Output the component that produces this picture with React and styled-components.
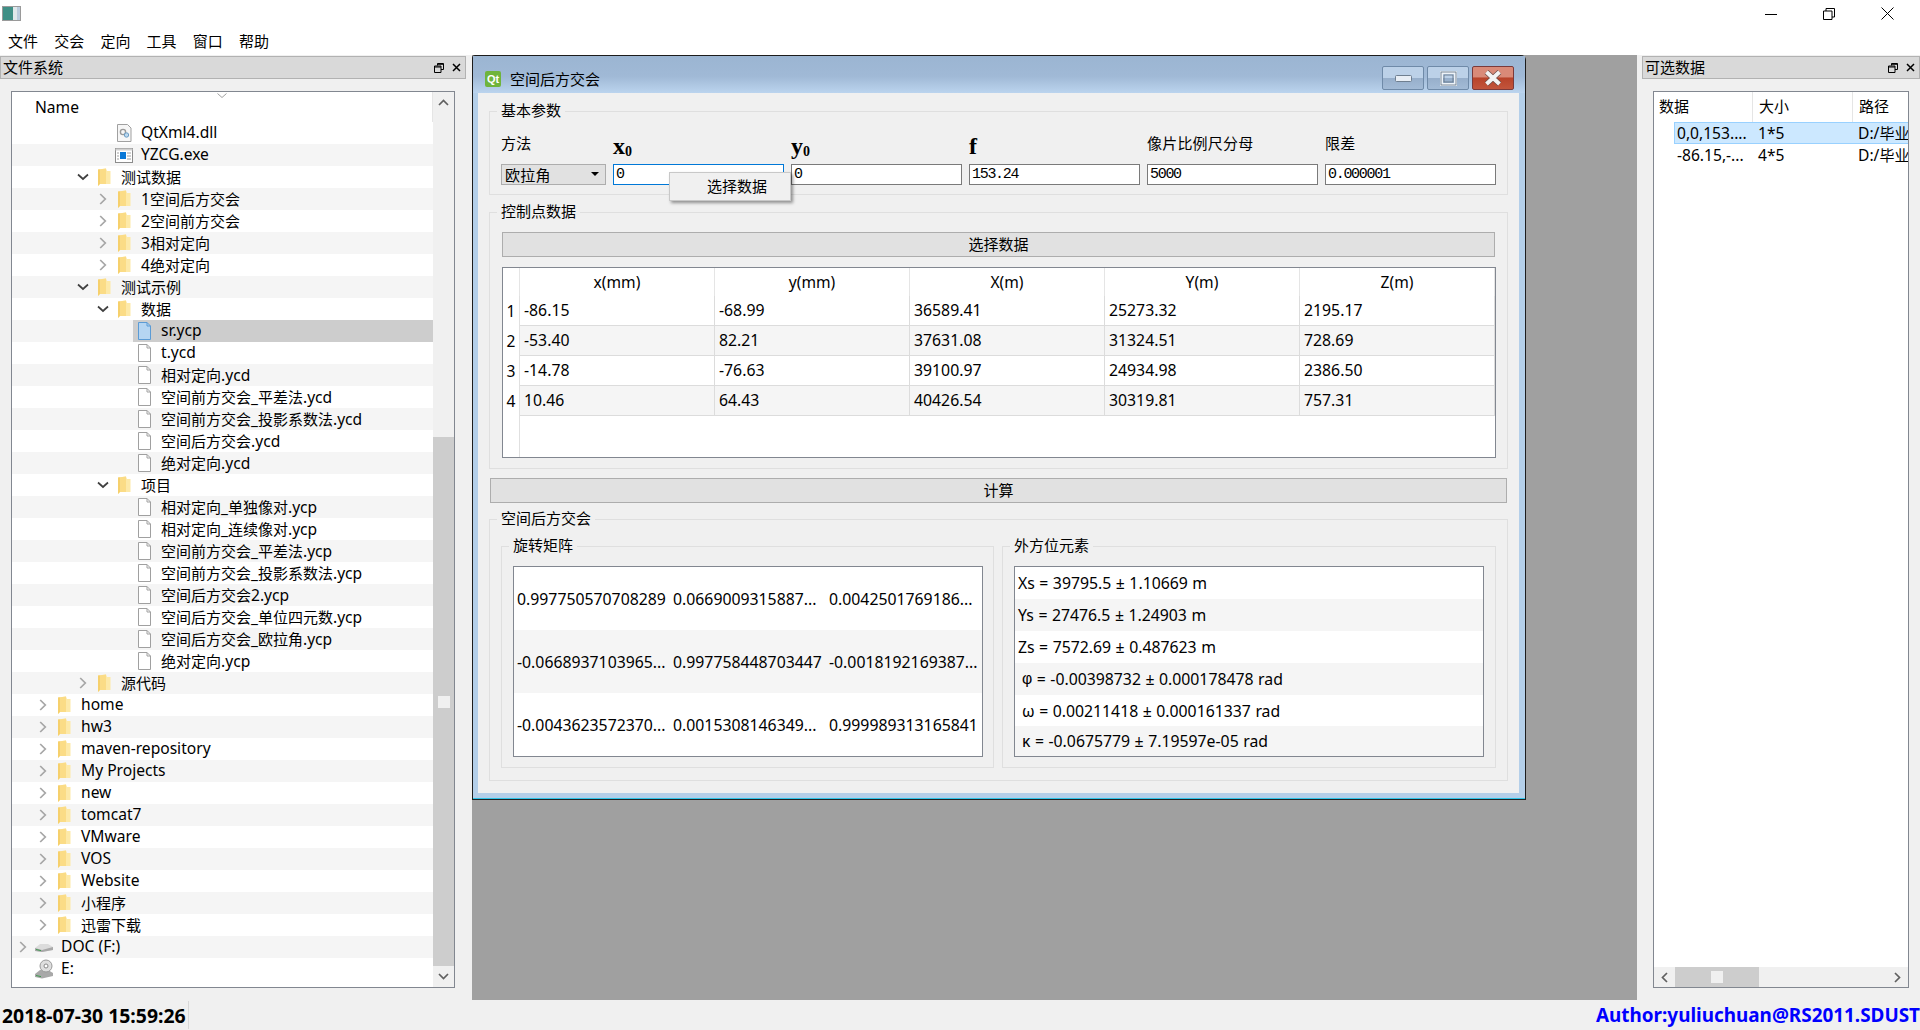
import React from 'react';
import styled, { createGlobalStyle } from 'styled-components';

const FONT = '"Noto Sans", "Noto Sans CJK SC", sans-serif';
const CJK = '"Noto Sans CJK SC", "Noto Sans", sans-serif';

const Global = createGlobalStyle`
  html, body { margin: 0; padding: 0; background: #f0f0f0; }
  * { box-sizing: border-box; }
  body { font-family: ${FONT}; font-size: 15px; color: #000; overflow: hidden; }
`;

const Page = styled.div`
  width: 1920px; height: 1030px; display: flex; flex-direction: column; background: #f0f0f0; overflow: hidden;
`;
const TopBar = styled.div`
  height: 28px; background: #fff; display: flex; align-items: flex-start; justify-content: space-between;
`;
const AppIcon = styled.div`
  width: 19px; height: 15px; margin: 6px 0 0 2px; border: 1px solid #9a9a9a;
  background: linear-gradient(90deg, #3f8f86 0 60%, #dfe8ea 60% 80%, #bcd 80%);
`;
const WinControls = styled.div`
  display: flex; padding-right: 3px;
`;
const WinControl = styled.div`
  width: 58.5px; height: 28px; display: flex; align-items: center; justify-content: center; padding-bottom: 1px;
`;
const MenuBar = styled.div`
  height: 27px; background: #fff; display: flex; align-items: center; padding: 0 0 1px 8px; gap: 16.2px;
  font-family: ${CJK}; font-size: 15px; line-height: 20px;
`;
const MenuItem = styled.span``;
const Main = styled.div`
  height: 945px; display: flex;
`;
const Dock = styled.div`
  width: ${p => p.$w}px; padding: 1px ${p => p.$pr}px 0 ${p => p.$pl}px; background: #f0f0f0; display: flex; flex-direction: column;
`;
const DockTitle = styled.div`
  height: 23px; background: #d9d9d9; border: 1px solid #b2b2b2; display: flex; align-items: center; justify-content: space-between;
  padding: 0 4px 2px 2px; font-family: ${CJK}; font-size: 15px; line-height: 18px;
`;
const DockTools = styled.div`
  display: flex; gap: 8px; align-items: center; padding-top: 2px;
`;
const ViewBox = styled.div`
  margin: 12px 0 0 ${p => p.$ml}px; width: ${p => p.$w}px; height: 897px; background: #fff; border: 1px solid #828790;
  position: relative; display: flex; flex-direction: ${p => p.$dir || 'row'}; overflow: hidden;
`;
const TreeCol = styled.div`
  width: 421px; display: flex; flex-direction: column;
`;
const TreeHeader = styled.div`
  height: 30px; flex: none; padding-left: 23px; display: flex; align-items: center; background: #fff; position: relative; font-size: 15.6px;
  border-right: 1px solid #e5e5e5;
`;
const SortMark = styled.svg`
  position: absolute; left: 205px; top: 1px;
`;
const TreeRow = styled.div`
  height: 22px; flex: none; display: flex; align-items: center; padding-left: ${p => 1 + p.$level * 20}px;
  background: ${p => (p.$odd ? '#f5f5f5' : '#fff')}; white-space: nowrap;
`;
const ChevBox = styled.div`
  width: 20px; height: 22px; flex: none; display: flex; align-items: center; justify-content: center;
`;
const RowCell = styled.div`
  flex: 1; height: 22px; display: flex; align-items: center; background: ${p => (p.$sel ? '#cdcdcd' : 'transparent')};
`;
const IconBox = styled.div`
  width: 22px; height: 22px; flex: none; display: flex; align-items: center; justify-content: center;
`;
const RowText = styled.span`
  margin-left: 6px; font-size: 15.6px; line-height: 21px; padding-bottom: 1px;
`;
const CjkRun = styled.span`
  font-family: ${CJK}; font-size: 15px;
`;
const VScroll = styled.div`
  width: 21px; margin-left: 0; background: #f0f0f0; display: flex; flex-direction: column; align-items: center; justify-content: space-between;
`;
const ScrollTrack = styled.div`
  flex: 1; width: 100%; display: flex; flex-direction: column; justify-content: flex-end;
`;
const ScrollThumb = styled.div`
  height: 529px; background: #cdcdcd; display: flex; justify-content: center; padding-top: 259px;
`;
const Grip = styled.div`
  width: 12px; height: 12px; background: #f0f0f0;
`;
const ArrowBox = styled.div`
  height: 21px; width: 100%; flex: none; display: flex; align-items: center; justify-content: center;
`;
const Mdi = styled.div`
  width: 1165px; background: #a0a0a0; display: flex; align-items: flex-start;
`;
const SubWindow = styled.div`
  width: 1054px; height: 745px; background: #b4cfe9; border: 1px solid #1c1c1c; border-bottom-color: #222;
  border-top-left-radius: 3px; border-top-right-radius: 5px; display: flex; flex-direction: column; padding: 0 6px 0 5px;
  box-shadow: inset 0 -1px 0 #2fc4e8;
`;
const SubTitle = styled.div`
  height: 37px; flex: none; margin: 0 -6px 0 -5px; padding: 0 11px 0 12px; display: flex; align-items: flex-start;
  background: linear-gradient(180deg, #9bb5d2 0%, #a0b9d6 55%, #bbd4ee 100%);
`;
const QtBadge = styled.div`
  width: 16px; height: 16px; margin-top: 15px; border-radius: 2px; background: #6fb43b; color: #fff; font: bold 11px "Liberation Sans", sans-serif;
  display: flex; align-items: center; justify-content: center;
`;
const SubTitleText = styled.span`
  margin: 13px 0 0 9px; font-family: ${CJK}; font-size: 15px; line-height: 20px; flex: 1;
`;
const SubBtns = styled.div`
  display: flex; gap: 3px; margin-top: 10px;
`;
const SubBtn = styled.div`
  width: 42px; height: 24px; border: 1px solid ${p => (p.$close ? '#7b3a3a' : '#6f8aa8')}; border-radius: 2px; display: flex; align-items: center; justify-content: center;
  background: ${p => (p.$close
    ? 'linear-gradient(180deg, #d98a78 0 45%, #b8432a 50%, #c2553c 100%)'
    : 'linear-gradient(180deg, #bcd1e8 0 48%, #97afcb 52%, #a3bbd6 100%)')};
`;
const Content = styled.div`
  width: 1041px; height: 700px; background: #f0f0f0; padding: 8px 11px 0; display: flex; flex-direction: column;
`;
const Group = styled.fieldset`
  margin: ${p => p.$mt || 0}px 0 0; padding: 0 ${p => p.$pr ?? 11}px 0 11px; border: 1px solid #dfdfdf; height: ${p => p.$h}px; min-width: 0;
  width: ${p => (p.$w ? `${p.$w}px` : 'auto')}; flex: none;
`;
const Legend = styled.legend`
  margin-left: -4px; padding: 0 4px; font-family: ${CJK}; font-size: 15px; line-height: 18px; height: 20px;
`;
const ParamGrid = styled.div`
  display: grid; grid-template-columns: 105px repeat(5, 171px); column-gap: 7px; grid-template-rows: 43px 21px;
`;
const ParamLabel = styled.div`
  display: flex; align-items: center; font-family: ${CJK}; font-size: 15px; padding-bottom: 1px; letter-spacing: 0.2px;
`;
const SymbolLabel = styled.div`
  display: flex; align-items: baseline; padding-top: 11px; font-family: "Liberation Serif", serif; font-weight: bold; font-size: 24px; line-height: 28px;
`;
const Sub = styled.span`
  font-size: 14px; line-height: 15px; margin-left: 0; transform: translateY(2px);
`;
const Combo = styled.div`
  background: #e1e1e1; border: 1px solid #adadad; display: flex; align-items: center; justify-content: space-between; padding: 0 6px 1px 3px;
  font-family: ${CJK}; font-size: 15px; letter-spacing: 0.2px;
`;
const Caret = styled.div`
  width: 0; height: 0; border-left: 4px solid transparent; border-right: 4px solid transparent; border-top: 4px solid #000;
`;
const InputCell = styled.div`
  position: relative;
`;
const FieldBox = styled.div`
  height: 21px; background: #fff; border: 1px solid ${p => (p.$focus ? '#0078d7' : '#7a7a7a')}; display: flex; align-items: center; padding-left: 2px;
  font-family: "Liberation Mono", monospace; font-size: 15px; letter-spacing: -1.3px;
`;
const Popup = styled.div`
  position: absolute; left: 56px; top: 8px; width: 122px; height: 29px; background: #f0f0f0; border: 1px solid #c8c8c8; padding: 0 0 2px 14px;
  box-shadow: 2px 2px 3px rgba(0,0,0,.4); display: flex; align-items: center; justify-content: center; font-family: ${CJK}; font-size: 15px; z-index: 3;
`;
const WideBtn = styled.div`
  background: #e1e1e1; border: 1px solid #adadad; height: 25px; display: flex; align-items: center; justify-content: center; padding-bottom: 2px;
  font-family: ${CJK}; font-size: 15px; margin: ${p => p.$m}; width: ${p => p.$w}px; flex: none;
`;
const Table = styled.div`
  margin: 10px 0 0 1px; width: 994px; height: 191px; background: #fff; border: 1px solid #828790; display: flex; flex-direction: column; overflow: hidden;
`;
const THead = styled.div`
  display: grid; grid-template-columns: 17px repeat(5, 195px); height: 28px; flex: none;
`;
const THeadCell = styled.div`
  display: flex; align-items: center; justify-content: center; font-size: 15.6px; border-right: 1px solid #e5e5e5; padding-bottom: 1px;
`;
const TRow = styled.div`
  display: grid; grid-template-columns: 17px repeat(5, 195px); height: 30px; flex: none;
`;
const RowHead = styled.div`
  background: #fff; display: flex; align-items: center; justify-content: center; border-right: 1px solid #e0e0e0; font-size: 15.6px; padding-bottom: 1px;
`;
const TCell = styled.div`
  background: ${p => (p.$odd ? '#f5f5f5' : '#fff')}; border-right: 1px solid #dcdcdc; border-bottom: 1px solid #dcdcdc; display: flex; align-items: center; padding: 0 0 2px 4px; font-size: 15.8px;
`;
const TFill = styled.div`
  flex: 1; margin-left: 16px; border-left: 1px solid #e0e0e0;
`;
const GroupRow = styled.div`
  display: flex; gap: 8px; margin-top: 7px;
`;
const ListFrame = styled.div`
  margin-top: 10px; width: 470px; height: 191px; background: #fff; border: 1px solid #828790; display: flex; flex-direction: column;
`;
const MatrixRow = styled.div`
  flex: 1; display: grid; grid-template-columns: repeat(3, 156px); align-items: center; background: ${p => (p.$odd ? '#f5f5f5' : '#fff')}; font-size: 15.8px; white-space: nowrap;
`;
const MatrixCell = styled.div`
  padding-left: 3px;
`;
const ElemRow = styled.div`
  height: ${p => p.$h}px; flex: none; display: flex; align-items: center; padding-left: ${p => p.$pl}px; background: ${p => (p.$odd ? '#f5f5f5' : '#fff')}; font-size: 15.8px; white-space: pre; word-spacing: 0.4px;
`;
const Phi = styled.span`
  font-family: "Liberation Sans", sans-serif;
`;
const DataCol = styled.div`
  flex: 1; min-width: 0; display: flex; flex-direction: column;
`;
const DataHead = styled.div`
  height: 30px; display: grid; grid-template-columns: 99px 100px 55px; flex: none;
`;
const DataHeadCell = styled.div`
  font-family: ${CJK}; font-size: 15px; display: flex; align-items: center; padding: 0 0 3px ${p => p.$pl}px; border-right: ${p => (p.$last ? 'none' : '1px solid #e5e5e5')};
`;
const DataRow = styled.div`
  height: 22px; display: grid; grid-template-columns: 99px 100px 55px; flex: none; white-space: nowrap; overflow: hidden; position: relative; font-size: 15.6px;
`;
const DataCell = styled.div`
  display: flex; align-items: center; overflow: hidden; padding: 0 0 0 ${p => p.$pl}px;
`;
const SelBand = styled.div`
  position: absolute; left: 20px; right: 0; top: 0; bottom: 0; background: #cce8ff; border: 1px solid #99d1ff; border-right: none;
`;
const CellText = styled.span`
  position: relative; line-height: 20px;
`;
const DataSpacer = styled.div`
  flex: 1;
`;
const HScroll = styled.div`
  height: 20px; flex: none; background: #f0f0f0; display: flex; align-items: stretch;
`;
const HThumb = styled.div`
  width: 84px; background: #cdcdcd; display: flex; align-items: center; justify-content: center;
`;
const HArrow = styled.div`
  width: 21px; display: flex; align-items: center; justify-content: center;
`;
const HFill = styled.div`
  flex: 1;
`;
const Status = styled.div`
  height: 30px; display: flex; align-items: center; justify-content: space-between; font-family: ${FONT}; font-weight: bold; background: #f0f0f0;
`;
const Clock = styled.div`
  padding-left: 2px; width: 189px; height: 28px; display: flex; align-items: center; border-right: 1px solid #d8d8d8; white-space: nowrap; color: #000; font-size: 19.4px;
`;
const Author = styled.div`
  color: #0000ff; white-space: nowrap; font-size: 18.9px;
`;

const Chevron = ({ open }) => open
  ? <svg width="12" height="8" viewBox="0 0 12 8"><path d="M1 1.5 L6 6 L11 1.5" fill="none" stroke="#404040" strokeWidth="1.7" /></svg>
  : <svg width="8" height="12" viewBox="0 0 8 12"><path d="M1.2 1 L6.3 6 L1.2 11" fill="none" stroke="#a6a6a6" strokeWidth="1.7" /></svg>;

const Folder = () => (
  <svg width="13" height="18" viewBox="0 0 13 18">
    <path d="M0 1.5 L8 .5 L9 3 L12.5 3 L12.5 16 L2 16 L0 18 Z" fill="#fde9a8" />
    <path d="M0 1.5 L2.5 1.2 L2.5 15.6 L0 18 Z" fill="#f6d06c" />
    <path d="M2.5 1.2 L8 .5 L8 16 L2.5 16 Z" fill="#fbdc86" />
  </svg>
);
const FileIcon = ({ blue }) => (
  <svg width="15" height="18" viewBox="0 0 15 18">
    <path d="M1.5 .5 H10 L13.5 4 V17.5 H1.5 Z" fill={blue ? '#b5d5f2' : '#fff'} stroke={blue ? '#5b9bd5' : '#a0a0a0'} />
    <path d="M10 .5 V4 H13.5" fill="none" stroke={blue ? '#5b9bd5' : '#a0a0a0'} />
  </svg>
);
const DllIcon = () => (
  <svg width="15" height="18" viewBox="0 0 15 18">
    <path d="M.5 .5 H10.5 L14 4 V17.5 H.5 Z" fill="#f6f6f6" stroke="#a0a0a0" />
    <circle cx="6" cy="8" r="2.6" fill="none" stroke="#9a9a9a" strokeWidth="1.4" />
    <circle cx="9.5" cy="11" r="2.2" fill="#bcd8ee" stroke="#6b9cc4" />
  </svg>
);
const ExeIcon = () => (
  <svg width="18" height="15" viewBox="0 0 18 15">
    <rect x=".5" y=".5" width="17" height="14" fill="#fff" stroke="#8c8c8c" />
    <rect x=".5" y=".5" width="17" height="2" fill="#d0d0d0" />
    <rect x="5" y="4" width="6" height="7" fill="#0a78d7" />
    <path d="M2 5 H4 M2 8 H4 M2 11 H4 M12 5 H16 M12 8 H16 M12 11 H16" stroke="#a0a0a0" />
  </svg>
);
const DriveIcon = () => (
  <svg width="20" height="12" viewBox="0 0 20 12">
    <path d="M1 7 L6 3 H14 L19 6 V9 L8 11 L1 10 Z" fill="#dcdcdc" />
    <path d="M1 7 L8 9 L19 6 V9 L8 11 L1 10 Z" fill="#a8a8a8" />
    <path d="M2 8.5 L7 9.6" stroke="#3f9a50" />
  </svg>
);
const DiscIcon = () => (
  <svg width="20" height="20" viewBox="0 0 20 20">
    <path d="M1 15 L6 11 H14 L19 14 V17 L8 19.5 L1 18 Z" fill="#a8a8a8" />
    <circle cx="12" cy="7" r="6" fill="#dedede" stroke="#9a9a9a" />
    <circle cx="12" cy="7" r="2" fill="#fff" stroke="#888" />
    <path d="M2 16.5 L7 17.6" stroke="#3f9a50" />
  </svg>
);
const RestoreSmall = () => (
  <svg width="10" height="10" viewBox="0 0 10 10">
    <path d="M3.5 2.5 V.5 H9.5 V6.5 H7 M.5 3 H7 V9.5 H.5 Z M.5 4 H7 M3.5 1.3 H9.5" fill="none" stroke="#000" />
  </svg>
);
const CloseSmall = () => (
  <svg width="9" height="9" viewBox="0 0 9 9"><path d="M1 1 L8 8 M8 1 L1 8" stroke="#000" strokeWidth="1.5" /></svg>
);
const UpArrow = () => <svg width="11" height="7" viewBox="0 0 11 7"><path d="M1 6 L5.5 1.5 L10 6" fill="none" stroke="#606060" strokeWidth="1.7" /></svg>;
const DownArrow = () => <svg width="11" height="7" viewBox="0 0 11 7"><path d="M1 1 L5.5 5.5 L10 1" fill="none" stroke="#606060" strokeWidth="1.7" /></svg>;
const LeftArrow = () => <svg width="7" height="11" viewBox="0 0 7 11"><path d="M6 1 L1.5 5.5 L6 10" fill="none" stroke="#606060" strokeWidth="1.7" /></svg>;
const RightArrow = () => <svg width="7" height="11" viewBox="0 0 7 11"><path d="M1 1 L5.5 5.5 L1 10" fill="none" stroke="#606060" strokeWidth="1.7" /></svg>;

const Mixed = ({ text }) => text.split(/([\u4e00-\u9fff]+)/).map((seg, i) => (
  /[\u4e00-\u9fff]/.test(seg) ? <CjkRun key={i}>{seg}</CjkRun> : seg
));

const closed = (name) => ({ name, chev: 'closed', icon: 'folder' });
const opened = (name) => ({ name, chev: 'open', icon: 'folder' });
const leaf = (name) => ({ name, icon: 'file' });

const tree = [
  { level: 4, name: 'QtXml4.dll', icon: 'dll' },
  { level: 4, name: 'YZCG.exe', icon: 'exe' },
  { level: 3, ...opened('测试数据') },
  ...['1空间后方交会', '2空间前方交会', '3相对定向', '4绝对定向'].map(n => ({ level: 4, ...closed(n) })),
  { level: 3, ...opened('测试示例') },
  { level: 4, ...opened('数据') },
  { level: 5, name: 'sr.ycp', icon: 'blue', sel: true },
  ...['t.ycd', '相对定向.ycd', '空间前方交会_平差法.ycd', '空间前方交会_投影系数法.ycd', '空间后方交会.ycd', '绝对定向.ycd'].map(n => ({ level: 5, ...leaf(n) })),
  { level: 4, ...opened('项目') },
  ...['相对定向_单独像对.ycp', '相对定向_连续像对.ycp', '空间前方交会_平差法.ycp', '空间前方交会_投影系数法.ycp', '空间后方交会2.ycp', '空间后方交会_单位四元数.ycp', '空间后方交会_欧拉角.ycp', '绝对定向.ycp'].map(n => ({ level: 5, ...leaf(n) })),
  { level: 3, ...closed('源代码') },
  ...['home', 'hw3', 'maven-repository', 'My Projects', 'new', 'tomcat7', 'VMware', 'VOS', 'Website', '小程序', '迅雷下载'].map(n => ({ level: 1, ...closed(n) })),
  { level: 0, name: 'DOC (F:)', chev: 'closed', icon: 'drive' },
  { level: 0, name: 'E:', icon: 'disc' },
];

const icons = {
  folder: <Folder />, file: <FileIcon />, blue: <FileIcon blue />, dll: <DllIcon />, exe: <ExeIcon />, drive: <DriveIcon />, disc: <DiscIcon />,
};

const tableRows = [
  ['-86.15', '-68.99', '36589.41', '25273.32', '2195.17'],
  ['-53.40', '82.21', '37631.08', '31324.51', '728.69'],
  ['-14.78', '-76.63', '39100.97', '24934.98', '2386.50'],
  ['10.46', '64.43', '40426.54', '30319.81', '757.31'],
];
const matrix = [
  ['0.997750570708289', '0.0669009315887...', '0.0042501769186...'],
  ['-0.0668937103965...', '0.997758448703447', '-0.0018192169387...'],
  ['-0.0043623572370...', '0.0015308146349...', '0.999989313165841'],
];
const elems = [
  [null, 'Xs = 39795.5 ± 1.10669 m', 32, 3],
  [null, 'Ys = 27476.5 ± 1.24903 m', 32, 3],
  [null, 'Zs = 7572.69 ± 0.487623 m', 32, 3],
  ['φ', ' = -0.00398732 ± 0.000178478 rad', 32, 7],
  ['ω', ' = 0.00211418 ± 0.000161337 rad', 31, 7],
  ['κ', ' = -0.0675779 ± 7.19597e-05 rad', 30, 7],
];

const DockTitleBar = ({ title }) => (
  <DockTitle>
    <span>{title}</span>
    <DockTools><RestoreSmall /><CloseSmall /></DockTools>
  </DockTitle>
);

export default function App() {
  return (
    <Page>
      <Global />
      <TopBar>
        <AppIcon />
        <WinControls>
          <WinControl><svg width="12" height="12" viewBox="0 0 12 12"><path d="M0 6.5 H12" stroke="#000" /></svg></WinControl>
          <WinControl><svg width="12" height="12" viewBox="0 0 12 12"><path d="M.5 3 H9 V11.5 H.5 Z M3 3 V.5 H11.5 V9 H9" fill="none" stroke="#000" /></svg></WinControl>
          <WinControl><svg width="13" height="13" viewBox="0 0 13 13"><path d="M.5 .5 L12.5 12.5 M12.5 .5 L.5 12.5" stroke="#000" /></svg></WinControl>
        </WinControls>
      </TopBar>
      <MenuBar>
        {['文件', '交会', '定向', '工具', '窗口', '帮助'].map(m => <MenuItem key={m}>{m}</MenuItem>)}
      </MenuBar>
      <Main>
        <Dock $w={472} $pr={6} $pl={0}>
          <DockTitleBar title="文件系统" />
          <ViewBox $ml={11} $w={444}>
            <TreeCol>
              <TreeHeader>
                Name
                <SortMark width="10" height="6" viewBox="0 0 10 6"><path d="M.5 .5 L5 4.5 L9.5 .5" fill="none" stroke="#a0a0a0" /></SortMark>
              </TreeHeader>
              {tree.map((r, i) => (
                <TreeRow key={i} $level={r.level} $odd={i % 2 === 1}>
                  <ChevBox>{r.chev && <Chevron open={r.chev === 'open'} />}</ChevBox>
                  <RowCell $sel={r.sel}>
                    <IconBox>{icons[r.icon]}</IconBox>
                    <RowText><Mixed text={r.name} /></RowText>
                  </RowCell>
                </TreeRow>
              ))}
            </TreeCol>
            <VScroll>
              <ArrowBox><UpArrow /></ArrowBox>
              <ScrollTrack><ScrollThumb><Grip /></ScrollThumb></ScrollTrack>
              <ArrowBox><DownArrow /></ArrowBox>
            </VScroll>
          </ViewBox>
        </Dock>
        <Mdi>
          <SubWindow>
            <SubTitle>
              <QtBadge>Qt</QtBadge>
              <SubTitleText>空间后方交会</SubTitleText>
              <SubBtns>
                <SubBtn><svg width="17" height="7" viewBox="0 0 17 7"><rect x=".5" y=".5" width="16" height="6" rx="1" fill="#e8eef5" stroke="#6f7f90" /></svg></SubBtn>
                <SubBtn><svg width="17" height="15" viewBox="0 0 17 15"><rect x="1.5" y="1.5" width="14" height="12" fill="none" stroke="#eef3f8" strokeWidth="3" /><rect x="1" y="1" width="15" height="13" fill="none" stroke="#5f6f80" strokeWidth=".8" /><rect x="4" y="4" width="9" height="7" fill="none" stroke="#5f6f80" strokeWidth=".8" /></svg></SubBtn>
                <SubBtn $close><svg width="18" height="16" viewBox="0 0 18 16"><path d="M2.5 2 L15.5 14 M15.5 2 L2.5 14" stroke="#6b4a45" strokeWidth="5.4" /><path d="M2.5 2 L15.5 14 M15.5 2 L2.5 14" stroke="#f3f3f3" strokeWidth="4" /></svg></SubBtn>
              </SubBtns>
            </SubTitle>
            <Content>
              <Group $h={94}>
                <Legend>基本参数</Legend>
                <ParamGrid>
                  <ParamLabel>方法</ParamLabel>
                  <SymbolLabel>x<Sub>0</Sub></SymbolLabel>
                  <SymbolLabel>y<Sub>0</Sub></SymbolLabel>
                  <SymbolLabel>f</SymbolLabel>
                  <ParamLabel>像片比例尺分母</ParamLabel>
                  <ParamLabel>限差</ParamLabel>
                  <Combo>欧拉角<Caret /></Combo>
                  <InputCell>
                    <FieldBox $focus>0</FieldBox>
                    <Popup>选择数据</Popup>
                  </InputCell>
                  <InputCell><FieldBox>0</FieldBox></InputCell>
                  <InputCell><FieldBox>153.24</FieldBox></InputCell>
                  <InputCell><FieldBox>5000</FieldBox></InputCell>
                  <InputCell><FieldBox>0.000001</FieldBox></InputCell>
                </ParamGrid>
              </Group>
              <Group $h={267} $mt={7}>
                <Legend>控制点数据</Legend>
                <WideBtn $m="10px 0 0 1px" $w={993}>选择数据</WideBtn>
                <Table>
                  <THead>
                    <THeadCell />
                    {['x(mm)', 'y(mm)', 'X(m)', 'Y(m)', 'Z(m)'].map(h => <THeadCell key={h}>{h}</THeadCell>)}
                  </THead>
                  {tableRows.map((row, i) => (
                    <TRow key={i}>
                      <RowHead>{i + 1}</RowHead>
                      {row.map((c, j) => <TCell key={j} $odd={i % 2 === 1}>{c}</TCell>)}
                    </TRow>
                  ))}
                  <TFill />
                </Table>
              </Group>
              <WideBtn $m="9px 0 0 1px" $w={1017}>计算</WideBtn>
              <Group $h={272} $mt={6}>
                <Legend>空间后方交会</Legend>
                <GroupRow>
                  <Group $h={232} $pr={10} $w={493}>
                    <Legend>旋转矩阵</Legend>
                    <ListFrame>
                      {matrix.map((row, i) => (
                        <MatrixRow key={i} $odd={i === 1}>
                          {row.map((c, j) => <MatrixCell key={j}>{c}</MatrixCell>)}
                        </MatrixRow>
                      ))}
                    </ListFrame>
                  </Group>
                  <Group $h={232} $pr={10} $w={494}>
                    <Legend>外方位元素</Legend>
                    <ListFrame>
                      {elems.map(([g, t, h, pl], i) => (
                        <ElemRow key={i} $h={h} $pl={pl} $odd={i % 2 === 1}>
                          {g === 'φ' ? <Phi>{g}</Phi> : g}{t}
                        </ElemRow>
                      ))}
                    </ListFrame>
                  </Group>
                </GroupRow>
              </Group>
            </Content>
          </SubWindow>
        </Mdi>
        <Dock $w={283} $pr={0} $pl={5}>
          <DockTitleBar title="可选数据" />
          <ViewBox $ml={11} $w={256} $dir="column">
            <DataCol>
              <DataHead>
                <DataHeadCell $pl={5}>数据</DataHeadCell>
                <DataHeadCell $pl={6}>大小</DataHeadCell>
                <DataHeadCell $pl={6} $last>路径</DataHeadCell>
              </DataHead>
              <DataRow>
                <SelBand />
                <DataCell $pl={23}><CellText>0,0,153....</CellText></DataCell>
                <DataCell $pl={5}><CellText>1*5</CellText></DataCell>
                <DataCell $pl={5}><CellText><Mixed text="D:/毕业" /></CellText></DataCell>
              </DataRow>
              <DataRow>
                <DataCell $pl={23}><CellText>-86.15,-...</CellText></DataCell>
                <DataCell $pl={5}><CellText>4*5</CellText></DataCell>
                <DataCell $pl={5}><CellText><Mixed text="D:/毕业" /></CellText></DataCell>
              </DataRow>
              <DataSpacer />
            </DataCol>
            <HScroll>
              <HArrow><LeftArrow /></HArrow>
              <HThumb><Grip /></HThumb>
              <HFill />
              <HArrow><RightArrow /></HArrow>
            </HScroll>
          </ViewBox>
        </Dock>
      </Main>
      <Status>
        <Clock>2018-07-30 15:59:26</Clock>
        <Author>Author:yuliuchuan@RS2011.SDUST</Author>
      </Status>
    </Page>
  );
}
